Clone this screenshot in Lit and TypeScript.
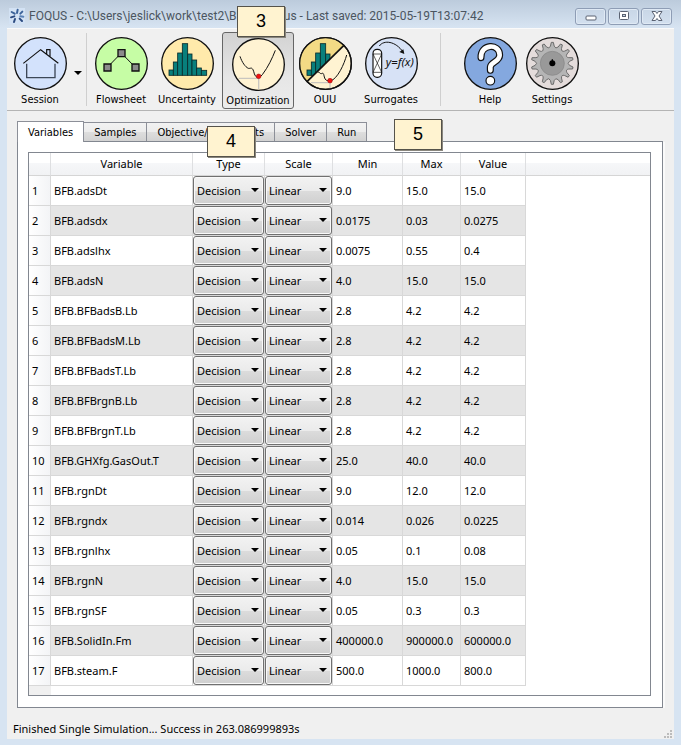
import { LitElement, html, svg, css, nothing } from "lit";
import { customElement, property, state } from "lit/decorators.js";
import { classMap } from "lit/directives/class-map.js";

type Row = [string, string, string, string];

const ROWS: Row[] = [
  ["BFB.adsDt", "9.0", "15.0", "15.0"],
  ["BFB.adsdx", "0.0175", "0.03", "0.0275"],
  ["BFB.adslhx", "0.0075", "0.55", "0.4"],
  ["BFB.adsN", "4.0", "15.0", "15.0"],
  ["BFB.BFBadsB.Lb", "2.8", "4.2", "4.2"],
  ["BFB.BFBadsM.Lb", "2.8", "4.2", "4.2"],
  ["BFB.BFBadsT.Lb", "2.8", "4.2", "4.2"],
  ["BFB.BFBrgnB.Lb", "2.8", "4.2", "4.2"],
  ["BFB.BFBrgnT.Lb", "2.8", "4.2", "4.2"],
  ["BFB.GHXfg.GasOut.T", "25.0", "40.0", "40.0"],
  ["BFB.rgnDt", "9.0", "12.0", "12.0"],
  ["BFB.rgndx", "0.014", "0.026", "0.0225"],
  ["BFB.rgnlhx", "0.05", "0.1", "0.08"],
  ["BFB.rgnN", "4.0", "15.0", "15.0"],
  ["BFB.rgnSF", "0.05", "0.3", "0.3"],
  ["BFB.SolidIn.Fm", "400000.0", "900000.0", "600000.0"],
  ["BFB.steam.F", "500.0", "1000.0", "800.0"],
];

const BARS = [
  [24, 99, 13], [37, 75, 13], [50, 48, 14], [64, 20, 16],
  [80, 51, 13], [93, 69, 14], [107, 93, 14], [121, 100, 16],
];

const bars = (list: number[][]) =>
  list.map(([x, y, w]) => svg`<rect x=${x} y=${y} width=${w} height=${115 - y} fill="#087f7c" stroke="#0a2a2a" stroke-width="2.5"/>`);

const disc = (fill: string) => svg`<circle cx="79.5" cy="79.5" r="77.5" fill=${fill} stroke="#111" stroke-width="4"/>`;

const gearPath = (() => {
  const teeth = 14;
  const step = (Math.PI * 2) / teeth;
  const at = (a: number, r: number) => `${(79 + r * Math.sin(a)).toFixed(1)} ${(79 - r * Math.cos(a)).toFixed(1)}`;
  let d = "";
  for (let i = 0; i < teeth; i++) {
    const a = i * step;
    d += `${i ? "L" : "M"}${at(a - step * 0.24, 52)}L${at(a - step * 0.11, 63)}L${at(a + step * 0.11, 63)}L${at(a + step * 0.24, 52)}Q${at(a + step * 0.5, 43)} ${at(a + step * 0.76, 52)}`;
  }
  return d + "Z";
})();

const ICONS: Record<string, unknown> = {
  session: svg`${disc("#d3e2fc")}
    <path d="M28 79 80 38l53 41M98 51V38h10v21" fill="none" stroke="#111" stroke-width="3.5"/>
    <path d="M38 80v42h85V80" fill="none" stroke="#3c4757" stroke-width="4"/>`,
  flowsheet: svg`${disc("#c6fda5")}
    <path d="M37 91 79 48l42 43" fill="none" stroke="#111" stroke-width="3"/>
    <g fill="#8b8b8b" stroke="#111" stroke-width="4"><path d="M69 38h21v21H69zM27 81h21v21H27zM111 81h21v21h-21z"/></g>`,
  uncertainty: svg`${disc("#ffeaab")}${bars(BARS)}`,
  optimization: svg`${disc("#fff3d2")}
    <path d="M20 121h60v32" fill="none" stroke="#c9c6c0" stroke-width="4"/>
    <path d="M24 55c6 18 16 32 25 36 8 1 9-4 14 4 4 8 3 18 12 23 5 2 11-2 16-8 18-24 29-48 39-73" fill="none" stroke="#111" stroke-width="3"/>
    <circle cx="80" cy="115" r="7" fill="#f21010" stroke="#8d0808" stroke-width="1.5"/>`,
  ouu: svg`${disc("#fff3d2")}
    <path d="M24 134A77 77 0 0 1 134 26Z" fill="#f3da85"/>
    <clipPath id="half"><path d="M0 0H159L24 134 0 159Z"/></clipPath>
    <g clip-path="url(#half)">${bars(BARS.slice(0, 5))}</g>
    <path d="M36 137h57v18" fill="none" stroke="#c9c6c0" stroke-width="4"/>
    <path d="M24 134 134 26" stroke="#111" stroke-width="5"/>
    <path d="M56 106c5-3 7 5 11 4 7-4 7 2 9 10 2 9 8 13 18 12 22-6 42-52 49-78" fill="none" stroke="#111" stroke-width="3"/>
    <circle cx="93" cy="131" r="7" fill="#f21010" stroke="#8d0808" stroke-width="1.5"/>
    <circle cx="79.5" cy="79.5" r="77.5" fill="none" stroke="#111" stroke-width="4"/>`,
  surrogates: svg`${disc("#d7e2f6")}
    <rect x="24" y="37" width="26" height="84" rx="12" fill="#fff" stroke="#111" stroke-width="3.5"/>
    <path d="M24 51h26M24 106h26M24 51l26 55M50 51l-26 55" stroke="#111" stroke-width="2"/>
    <path d="M43 27C56 8 92 12 114 45" fill="none" stroke="#111" stroke-width="3"/>
    <path d="M118 51 103 45l12-8z" fill="#111"/>
    <text x="62" y="88" class="formula">y=f(x)</text>`,
  help: svg`${disc("#84a8df")}
    <g fill="none" stroke-linecap="round" stroke-linejoin="round">
      <path d="M51 62C49 20 107 18 107 54 107 75 80 74 79 90v10" stroke="#111" stroke-width="21"/>
      <path d="M51 62C49 20 107 18 107 54 107 75 80 74 79 90v10" stroke="#fff" stroke-width="14"/>
    </g>
    <circle cx="79" cy="131" r="13" fill="#fff" stroke="#111" stroke-width="3.5"/>`,
  settings: svg`${disc("#e4dcdb")}
    <path d=${gearPath} fill="#b5b5b5" stroke="#6b6b6b" stroke-width="3" stroke-linejoin="round"/>
    <circle cx="79" cy="79" r="36" fill="#999" stroke="#858585" stroke-width="2"/>
    <circle cx="79" cy="79" r="9"/><path d="M77 67h4v8h-4z"/>`,
};

@customElement("tool-button")
class ToolButton extends LitElement {
  @property() icon = "";
  @property() label = "";
  @property({ type: Boolean }) pressed = false;

  static styles = css`
    :host { display: block; flex: none; width: 62px; }
    :host([size="long"]) { width: 70px; }
    :host([size="longest"]) { width: 72px; }
    .button {
      display: flex; flex-direction: column; align-items: center; gap: 2px;
      box-sizing: border-box; width: 100%; height: 77px; padding: 4px 0 0;
      border: 1px solid transparent; border-radius: 3px; background: none;
      font: 11px/16px "DejaVu Sans Condensed", "DejaVu Sans", sans-serif;
      font-stretch: condensed; color: #000; white-space: nowrap;
    }
    .pressed { padding-top: 5px; border-color: #666; background: linear-gradient(#d2d2d2, #e6e6e6 60%, #ececec); }
    .icon { display: block; width: 53px; height: 53px; flex: none; }
    .formula { font: italic 35px "Noto Sans", sans-serif; fill: #111; }
  `;

  render() {
    return html`<button type="button" aria-pressed=${this.pressed} class=${classMap({ button: true, pressed: this.pressed })}>
      <svg class="icon" viewBox="0 0 159 159" aria-hidden="true">${ICONS[this.icon]}</svg>
      <span>${this.label}</span>
    </button>`;
  }
}

@customElement("combo-box")
class ComboBox extends LitElement {
  @property({ attribute: false }) options: string[] = [];
  @property() label = "";

  static styles = css`
    :host { display: block; }
    .wrap { display: grid; align-items: center; }
    .select, .arrow { grid-area: 1 / 1; }
    .select {
      appearance: none; box-sizing: border-box; width: 100%; height: 29px; margin: 0; padding: 0 0 0 3px;
      border: 1px solid #707070; border-radius: 3px; box-shadow: inset 0 0 0 1px #f9f9f9;
      background: linear-gradient(#f2f2f2, #ebebeb 50%, #dcdcdc 51%, #cfcfcf);
      font: 11px/16px "Noto Sans", sans-serif; color: #000;
    }
    .arrow { justify-self: end; width: 8px; height: 4px; margin-right: 5px; margin-bottom: 2px; pointer-events: none; }
  `;

  render() {
    return html`<div class="wrap">
      <select class="select" aria-label=${this.label}>${this.options.map((o) => html`<option>${o}</option>`)}</select>
      <svg class="arrow" viewBox="0 0 8 4" aria-hidden="true"><path d="M0 0h8L4 4z"/></svg>
    </div>`;
  }
}

@customElement("variables-table")
class VariablesTable extends LitElement {
  static styles = css`
    :host { display: flex; flex-direction: column; flex: 1; border: 1px solid #828790; background: #fff; }
    .table { width: 100%; table-layout: fixed; border-spacing: 0; font: 11px/16px "Noto Sans", sans-serif; color: #000; }
    .c-row { width: 22px; }
    .c-name { width: 142px; }
    .c-type { width: 72px; }
    .c-scale { width: 68px; }
    .c-min { width: 70px; }
    .c-max { width: 58px; }
    .c-value { width: 65px; }
    th { font-weight: 400; box-sizing: border-box; padding: 0; }
    .head th {
      height: 23px; border-right: 1px solid #dedfe1; border-bottom: 1px solid #d5d5d5;
      background: linear-gradient(#fff 45%, #f6f7f9 46%, #f1f2f4);
    }
    .head .rest { border-right: 0; }
    .index {
      border-right: 1px solid #d8d8d8; border-bottom: 1px solid #d8d8d8; text-align: left; padding-left: 3px;
      background: linear-gradient(90deg, #fff, #f3f4f6);
    }
    td {
      box-sizing: border-box; height: 30px; padding: 0 0 0 3px; white-space: nowrap;
      border-right: 1px solid #d8d8d8; border-bottom: 1px solid #d8d8d8;
    }
    .cell { padding: 0; }
    .alt td { background: #e5e5e5; }
    .stub { flex: 1; min-height: 9px; width: 22px; background: #f0f0f0; }
  `;

  render() {
    return html`<table class="table">
        <colgroup>
          ${["row", "name", "type", "scale", "min", "max", "value", "rest"].map((c) => html`<col class="c-${c}" />`)}
        </colgroup>
        <thead>
          <tr class="head">
            <th></th>
            ${["Variable", "Type", "Scale", "Min", "Max", "Value"].map((h) => html`<th scope="col">${h}</th>`)}
            <th class="rest"></th>
          </tr>
        </thead>
        <tbody>
          ${ROWS.map(([name, min, max, value], i) => html`<tr class=${i % 2 ? "alt" : "plain"}>
            <th scope="row" class="index">${i + 1}</th>
            <td>${name}</td>
            <td class="cell"><combo-box label="Type of ${name}" .options=${["Decision", "Fixed"]}></combo-box></td>
            <td class="cell"><combo-box label="Scale of ${name}" .options=${["Linear", "Log"]}></combo-box></td>
            <td>${min}</td><td>${max}</td><td>${value}</td>
          </tr>`)}
        </tbody>
      </table>
      <div class="stub"></div>`;
  }
}

@customElement("app-root")
class AppRoot extends LitElement {
  @state() private tab = "Variables";

  static styles = css`
    :host {
      display: flex; flex-direction: column; box-sizing: border-box; min-height: 100vh; position: relative;
      padding: 0 7px 6px; background: #d7e4f2; color: #000;
      font: 11px/16px "Noto Sans", sans-serif;
    }
    .title { display: flex; align-items: center; height: 28px; margin: 0 -7px; padding: 4px 9px 0;
      box-sizing: border-box; background: linear-gradient(#bccbdc, #d7e4f2); }
    .logo { width: 16px; height: 16px; margin-right: 4px; }
    .caption { flex: 1; margin: 0; font: 12px/16px Roboto, "Noto Sans", sans-serif; color: #4b5560; white-space: nowrap; }
    .window-buttons { display: flex; gap: 2px; }
    .window-button { width: 31px; height: 17px; padding: 0; border: 1px solid #8e9db5; border-radius: 3px;
      background: linear-gradient(#c8d6e6, #d3e0ef); box-shadow: inset 0 0 0 1px #dfe9f4; display: grid; place-items: center; }
    .window-button svg { width: 14px; height: 10px; display: block; }
    .toolbar { display: flex; align-items: flex-start; height: 83px; padding: 3px 0 0 2px; box-sizing: border-box;
      background: #f0f0f0; border-top: 1px solid #fafafa; border-bottom: 1px solid #b4b4b4; }
    .menu { width: 14px; height: 77px; padding: 0; border: 0; background: none; }
    .menu svg { width: 8px; height: 4px; }
    .rule { flex: none; width: 1px; height: 73px; margin: 1px 3px 0 1px; background: #cfcfcf; }
    .rule.far { margin: 1px 18px 0 14px; }
    .content { flex: 1; display: flex; flex-direction: column; padding: 10px 11px 0 10px; background: #f0f0f0; }
    .tabs { display: flex; align-items: flex-end; }
    .tab { box-sizing: border-box; height: 19px; margin: 0 0 0 -1px; padding: 1px 10px 0; border: 1px solid #8c8f98; border-bottom: 0;
      background: linear-gradient(#f2f2f2, #ececec 50%, #dedede 51%, #d2d2d2);
      font: 11px/16px "DejaVu Sans Condensed", "DejaVu Sans", sans-serif; font-stretch: condensed; color: #000; white-space: nowrap; }
    .tab.active { height: 21px; margin: 0 0 -1px; background: #fff; z-index: 1; }
    .pane { flex: 1; display: flex; padding: 10px 11px 11px 10px; border: 1px solid #828790; background: #fff; box-shadow: 2px 1px 0 #fafafa; }
    .status { display: flex; justify-content: space-between; align-items: center; height: 31px; padding: 11px 0 0 6px; box-sizing: border-box; background: #f0f0f0; }
    .grip { align-self: flex-end; width: 9px; height: 9px; margin: 0 2px 1px 0; }
    .note { position: absolute; box-sizing: border-box; width: 48px; height: 31px; border: 1px solid #55524a; background: #fff3d0;
      box-shadow: 1px 1px 0 #8a877e; font: 18px/28px "Liberation Sans", sans-serif; text-align: center; z-index: 2; }
    .n3 { left: 237px; top: 6px; }
    .n4 { left: 207px; top: 126px; }
    .n5 { left: 394px; top: 119px; }
  `;

  render() {
    return html`
      <header class="title">
        <svg class="logo" viewBox="0 0 48 48" aria-hidden="true">
          <rect width="48" height="48" fill="#d3e2f4"/>
          <g stroke-width="6" stroke-linecap="round">
            <path d="M26 5 24 15M8 12l9 5M34 17l6-6" stroke="#3b6299"/>
            <path d="M6 28l10-3M18 33l-3 9M32 32l7 7" stroke="#2b4a80"/>
            <path d="M34 25l9 1" stroke="#5a82b6"/>
          </g>
        </svg>
        <h1 class="caption">FOQUS - C:\\Users\\jeslick\\work\\test2\\BFB_1.foqus - Last saved: 2015-05-19T13:07:42</h1>
        <div class="window-buttons">
          <button type="button" class="window-button" aria-label="Minimize"><svg viewBox="0 0 14 10"><rect x="2" y="5" width="10" height="4" rx="1" fill="#fff" stroke="#5a6272"/></svg></button>
          <button type="button" class="window-button" aria-label="Maximize"><svg viewBox="0 0 14 10"><rect x="2.500" y=".5" width="9" height="8" rx="1" fill="#fff" stroke="#5a6272"/><rect x="5.500" y="3.500" width="3" height="2" fill="#c8d6e6" stroke="#5a6272"/></svg></button>
          <button type="button" class="window-button" aria-label="Close"><svg viewBox="0 0 14 10"><path d="M2 .5h3.500L7 2.500 8.500.5H12L9 5l3 4.500H8.500L7 7.500 5.500 9.500H2L5 5z" fill="#fff" stroke="#5a6272"/></svg></button>
        </div>
      </header>
      <nav class="toolbar" aria-label="Main">
        <tool-button icon="session" label="Session"></tool-button>
        <button type="button" class="menu" aria-label="Session menu"><svg viewBox="0 0 8 4"><path d="M0 0h8L4 4z"/></svg></button>
        <span class="rule"></span>
        <tool-button icon="flowsheet" label="Flowsheet"></tool-button>
        <tool-button icon="uncertainty" label="Uncertainty" size="long"></tool-button>
        <tool-button icon="optimization" label="Optimization" size="longest" pressed></tool-button>
        <tool-button icon="ouu" label="OUU"></tool-button>
        <tool-button icon="surrogates" label="Surrogates" size="long"></tool-button>
        <span class="rule far"></span>
        <tool-button icon="help" label="Help"></tool-button>
        <tool-button icon="settings" label="Settings"></tool-button>
      </nav>
      <main class="content">
        <div class="tabs" role="tablist">
          ${["Variables", "Samples", "Objective/Constraints", "Solver", "Run"].map((t) => html`<button type="button" role="tab"
            aria-selected=${t === this.tab} class=${classMap({ tab: true, active: t === this.tab })}
            @click=${() => (this.tab = t)}>${t}</button>`)}
        </div>
        <section class="pane">${this.tab === "Variables" ? html`<variables-table></variables-table>` : nothing}</section>
      </main>
      <footer class="status">
        <span>Finished Single Simulation... Success in 263.086999893s</span>
        <svg class="grip" viewBox="0 0 9 9" aria-hidden="true"><path d="M7 1h2v2H7zM4 4h2v2H4zM7 4h2v2H7zM1 7h2v2H1zM4 7h2v2H4zM7 7h2v2H7z" fill="#bcbcbc"/></svg>
      </footer>
      <div class="note n3">3</div>
      <div class="note n4">4</div>
      <div class="note n5">5</div>
    `;
  }
}
